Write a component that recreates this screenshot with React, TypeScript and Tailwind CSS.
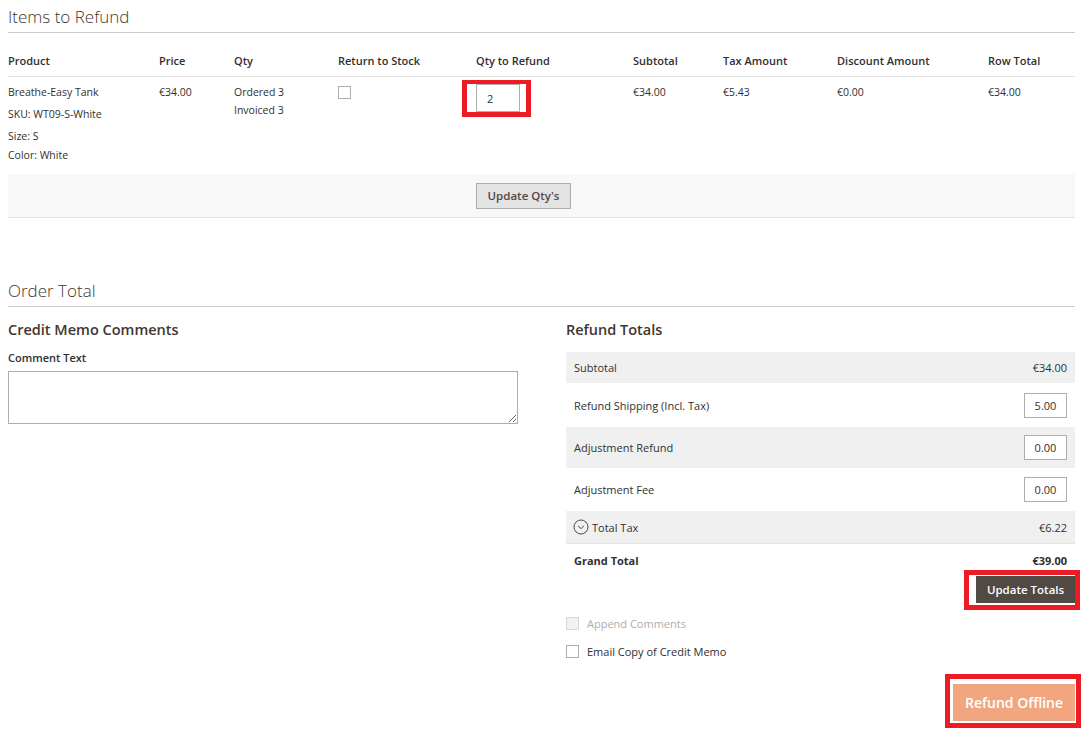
import React from "react";

const cols = "grid grid-cols-[151px_75px_104px_138px_157px_90px_114px_151px_87px]";

function Checkbox({ disabled }: { disabled?: boolean }) {
  return (
    <span
      className={
        "inline-block w-[13px] h-[13px] border " +
        (disabled ? "border-[#d6d6d6] bg-[#f2f2f2]" : "border-[#adadad] bg-white")
      }
    />
  );
}

function SmallInput({ value }: { value: string }) {
  return (
    <div className="w-[43px] h-[25px] border border-[#adadad] bg-white flex items-center justify-center text-[11px] text-[#303030]">
      {value}
    </div>
  );
}

export default function App() {
  return (
    <div className="w-[1081px] h-[732px] bg-white overflow-hidden font-['Open_Sans',sans-serif] text-[#303030] pl-2 pr-[6px]">
      {/* Items to Refund */}
      <div className="pt-[5px]">
        <h2 className="text-[17px] leading-[24px] font-light text-[#41362f] pb-[3px] border-b border-[#cccccc]">
          Items to Refund
        </h2>
      </div>

      <div className={cols + " h-[44px] items-end pb-[8px] border-b border-[#e3e3e3] text-[11px] leading-[15px] font-semibold text-[#303030]"}>
        <div>Product</div>
        <div>Price</div>
        <div>Qty</div>
        <div>Return to Stock</div>
        <div>Qty to Refund</div>
        <div>Subtotal</div>
        <div>Tax Amount</div>
        <div>Discount Amount</div>
        <div>Row Total</div>
      </div>

      <div className={cols + " pt-[8px] pb-[11px] text-[10.5px] leading-[15px] text-[#303030]"}>
        <div>
          <div>Breathe-Easy Tank</div>
          <div className="mt-[7px]">SKU: WT09-S-White</div>
          <div className="mt-[7px]">Size: S</div>
          <div className="mt-[4px]">Color: White</div>
        </div>
        <div>€34.00</div>
        <div>
          <div>Ordered 3</div>
          <div className="mt-[3px]">Invoiced 3</div>
        </div>
        <div className="pt-[1px]">
          <Checkbox />
        </div>
        <div className="-mt-[1px]">
          <div className="relative w-[44px]">
            <div className="w-[44px] h-[28px] border border-[#adadad] bg-white flex items-center pl-[10px] text-[11px]">
              2
            </div>
            <div className="absolute -left-[14px] -top-[4px] -right-[11px] -bottom-[5px] border-[5px] border-t-4 border-[#ed1c24] pointer-events-none" />
          </div>
        </div>
        <div>€34.00</div>
        <div>€5.43</div>
        <div>€0.00</div>
        <div>€34.00</div>
      </div>

      <div className="h-[44px] bg-[#f8f8f8] border-b border-[#e3e3e3] flex items-center pl-[468px]">
        <button className="h-[26px] w-[95px] bg-[#e3e3e3] border border-[#adadad] text-[11.5px] font-semibold text-[#514943]">
          Update Qty's
        </button>
      </div>

      {/* Order Total */}
      <div className="mt-[61px]">
        <h2 className="text-[17px] leading-[24px] font-light text-[#41362f] pb-[3px] border-b border-[#cccccc]">
          Order Total
        </h2>
      </div>

      <div className="grid grid-cols-[510px_509px] gap-x-[48px] mt-[13px]">
        {/* Left */}
        <div>
          <h3 className="text-[14.5px] leading-[20px] font-semibold text-[#41362f]">Credit Memo Comments</h3>
          <div className="mt-[10px] text-[11px] leading-[15px] font-semibold text-[#303030]">Comment Text</div>
          <textarea className="mt-[6px] block w-[510px] h-[53px] border border-[#adadad] bg-white resize-y outline-none" />
        </div>

        {/* Right */}
        <div>
          <h3 className="text-[14.5px] leading-[20px] font-semibold text-[#41362f]">Refund Totals</h3>
          <div className="mt-[12px] text-[11px] leading-[15px] text-[#303030]">
            <div className="h-[31px] bg-[#f0f0f0] flex items-center justify-between px-[8px]">
              <span>Subtotal</span>
              <span>€34.00</span>
            </div>
            <div className="h-[44px] bg-white flex items-center justify-between px-[8px]">
              <span>Refund Shipping (Incl. Tax)</span>
              <SmallInput value="5.00" />
            </div>
            <div className="h-[41px] bg-[#f0f0f0] flex items-center justify-between px-[8px]">
              <span>Adjustment Refund</span>
              <SmallInput value="0.00" />
            </div>
            <div className="h-[43px] bg-white flex items-center justify-between px-[8px]">
              <span>Adjustment Fee</span>
              <SmallInput value="0.00" />
            </div>
            <div className="h-[33px] bg-[#f0f0f0] border-b border-[#e3e3e3] flex items-center justify-between px-[8px]">
              <span className="flex items-center gap-[3px] -ml-[1px]">
                <svg width="16" height="16" viewBox="0 0 16 16" fill="none" stroke="#514943" strokeWidth="1">
                  <circle cx="8" cy="8" r="7" />
                  <path d="M5 6.8 L8 9.6 L11 6.8" />
                </svg>
                Total Tax
              </span>
              <span>€6.22</span>
            </div>
            <div className="h-[32px] flex items-center justify-between px-[8px] font-bold">
              <span>Grand Total</span>
              <span>€39.00</span>
            </div>
          </div>

          <div className="flex justify-end">
            <div className="relative">
              <button className="h-[27px] w-[99px] bg-[#514943] text-white text-[11.5px] font-semibold">
                Update Totals
              </button>
              <div className="absolute -left-[12px] -top-[6px] -right-[5px] -bottom-[7px] border-[5px] border-[#ed1c24] pointer-events-none" />
            </div>
          </div>

          <div className="mt-[13px] flex items-center gap-[8px] text-[11px] leading-[15px] text-[#adadad]">
            <Checkbox disabled />
            <span>Append Comments</span>
          </div>
          <div className="mt-[13px] flex items-center gap-[8px] text-[11px] leading-[15px] text-[#303030]">
            <Checkbox />
            <span>Email Copy of Credit Memo</span>
          </div>

          <div className="mt-[25px] flex justify-end">
            <div className="relative">
              <button className="h-[37px] w-[122px] bg-[#f2a67f] text-white text-[14px] font-semibold">
                Refund Offline
              </button>
              <div className="absolute -left-[8px] -top-[10px] -right-[6px] -bottom-[7px] border-[5px] border-[#ed1c24] pointer-events-none" />
            </div>
          </div>
        </div>
      </div>
    </div>
  );
}
